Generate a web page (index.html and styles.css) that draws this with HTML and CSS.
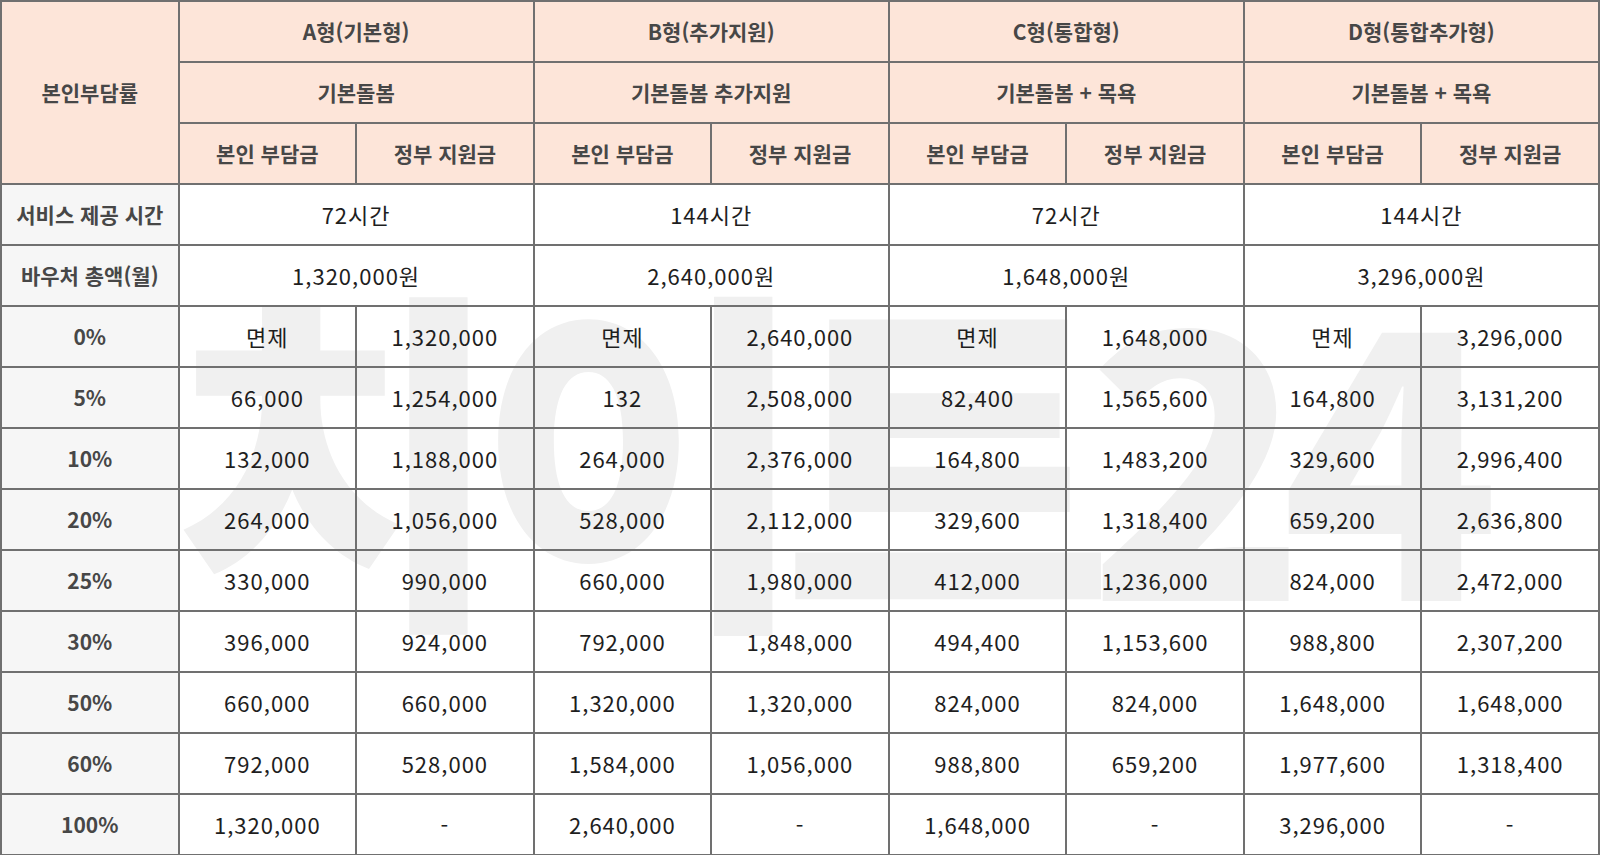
FILE: index.html
```html
<!DOCTYPE html>
<html lang="ko">
<head>
<meta charset="utf-8">
<title>본인부담률</title>
<link rel="stylesheet" href="styles.css">
</head>
<body>
<div class="wrap">
  <div class="watermark" aria-hidden="true">치이트24</div>
  <table class="fee">
    <colgroup>
      <col><col><col><col><col><col><col><col><col>
    </colgroup>
    <thead>
      <tr>
        <th rowspan="3">본인부담률</th>
        <th colspan="2">A형(기본형)</th>
        <th colspan="2">B형(추가지원)</th>
        <th colspan="2">C형(통합형)</th>
        <th colspan="2">D형(통합추가형)</th>
      </tr>
      <tr>
        <th colspan="2">기본돌봄</th>
        <th colspan="2">기본돌봄 추가지원</th>
        <th colspan="2">기본돌봄 + 목욕</th>
        <th colspan="2">기본돌봄 + 목욕</th>
      </tr>
      <tr>
        <th>본인 부담금</th><th>정부 지원금</th>
        <th>본인 부담금</th><th>정부 지원금</th>
        <th>본인 부담금</th><th>정부 지원금</th>
        <th>본인 부담금</th><th>정부 지원금</th>
      </tr>
    </thead>
    <tbody>
      <tr>
        <th>서비스 제공 시간</th>
        <td colspan="2">72시간</td><td colspan="2">144시간</td><td colspan="2">72시간</td><td colspan="2">144시간</td>
      </tr>
      <tr>
        <th>바우처 총액(월)</th>
        <td colspan="2">1,320,000원</td><td colspan="2">2,640,000원</td><td colspan="2">1,648,000원</td><td colspan="2">3,296,000원</td>
      </tr>
      <tr><th>0%</th><td>면제</td><td>1,320,000</td><td>면제</td><td>2,640,000</td><td>면제</td><td>1,648,000</td><td>면제</td><td>3,296,000</td></tr>
      <tr><th>5%</th><td>66,000</td><td>1,254,000</td><td>132</td><td>2,508,000</td><td>82,400</td><td>1,565,600</td><td>164,800</td><td>3,131,200</td></tr>
      <tr><th>10%</th><td>132,000</td><td>1,188,000</td><td>264,000</td><td>2,376,000</td><td>164,800</td><td>1,483,200</td><td>329,600</td><td>2,996,400</td></tr>
      <tr><th>20%</th><td>264,000</td><td>1,056,000</td><td>528,000</td><td>2,112,000</td><td>329,600</td><td>1,318,400</td><td>659,200</td><td>2,636,800</td></tr>
      <tr><th>25%</th><td>330,000</td><td>990,000</td><td>660,000</td><td>1,980,000</td><td>412,000</td><td>1,236,000</td><td>824,000</td><td>2,472,000</td></tr>
      <tr><th>30%</th><td>396,000</td><td>924,000</td><td>792,000</td><td>1,848,000</td><td>494,400</td><td>1,153,600</td><td>988,800</td><td>2,307,200</td></tr>
      <tr><th>50%</th><td>660,000</td><td>660,000</td><td>1,320,000</td><td>1,320,000</td><td>824,000</td><td>824,000</td><td>1,648,000</td><td>1,648,000</td></tr>
      <tr><th>60%</th><td>792,000</td><td>528,000</td><td>1,584,000</td><td>1,056,000</td><td>988,800</td><td>659,200</td><td>1,977,600</td><td>1,318,400</td></tr>
      <tr><th>100%</th><td>1,320,000</td><td>-</td><td>2,640,000</td><td>-</td><td>1,648,000</td><td>-</td><td>3,296,000</td><td>-</td></tr>
    </tbody>
  </table>
</div>
</body>
</html>
```
FILE: styles.css
```css
html, body {
  margin: 0;
  padding: 0;
  background: #ffffff;
}

.wrap {
  position: relative;
  width: 1600px;
  height: 855px;
  overflow: hidden;
  background: #ffffff;
}

.watermark {
  position: absolute;
  left: 172px;
  top: 264px;
  z-index: 0;
  font-family: "Noto Sans CJK KR", "Noto Sans", sans-serif;
  font-weight: 900;
  font-size: 360px;
  line-height: 1;
  letter-spacing: -26px;
  color: #f0f0f0;
  white-space: nowrap;
}

.fee {
  position: relative;
  z-index: 1;
  width: 1600px;
  border-collapse: collapse;
  table-layout: fixed;
  font-family: "Noto Sans CJK KR", "Noto Sans", sans-serif;
  font-size: 21px;
  line-height: 1.2;
}

.fee col {
  width: 11.111%;
}

.fee tr {
  height: 61px;
}

.fee th,
.fee td {
  border: 2px solid #707070;
  text-align: center;
  vertical-align: middle;
  padding: 0;
}

.fee thead th {
  background: #fde5d9;
  color: #474747;
  font-weight: 700;
}

.fee tbody th {
  background: #f6f6f6;
  color: #474747;
  font-weight: 700;
}

.fee td {
  color: #1e1e1e;
  font-weight: 400;
  font-size: 22px;
  letter-spacing: 1px;
  background: transparent;
}
```
